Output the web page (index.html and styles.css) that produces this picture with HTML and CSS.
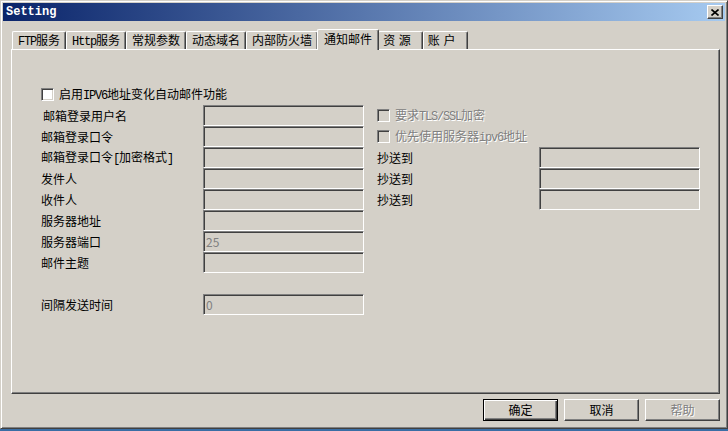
FILE: index.html
```html
<!DOCTYPE html>
<html>
<head lang="zh">
    <meta charset="UTF-8">
    <title>Setting</title>
    <link rel="stylesheet" href="styles.css">
</head>
<body>
<div class="window">
    <div class="titlebar">
        <span class="title">Setting</span>
        <span class="close">
            <svg width="8" height="7" viewBox="0 0 8 7">
                <path d="M0.5 0.5 L7.5 6.5 M7.5 0.5 L0.5 6.5" stroke="#000" stroke-width="1.6" fill="none"/>
            </svg>
        </span>
    </div>

    <div class="tabs">
        <div class="tab"><span class="en">FTP</span>服务</div>
        <div class="tab"><span class="en">Http</span>服务</div>
        <div class="tab">常规参数</div>
        <div class="tab">动态域名</div>
        <div class="tab">内部防火墙</div>
        <div class="tab selected">通知邮件</div>
        <div class="tab spaced">资 源</div>
        <div class="tab spaced">账 户</div>
    </div>

    <div class="panel">
        <div class="form">
            <label class="check top-check"><span class="box white"></span><span>启用<span class="en">IPV6</span>地址变化自动邮件功能</span></label>

            <span class="lbl indent">邮箱登录用户名</span>
            <span class="field"></span>
            <label class="check rlbl disabled"><span class="box"></span><span>要求<span class="en">TLS/SSL</span>加密</span></label>

            <span class="lbl">邮箱登录口令</span>
            <span class="field"></span>
            <label class="check rlbl disabled"><span class="box"></span><span>优先使用服务器<span class="en">ipv6</span>地址</span></label>

            <span class="lbl">邮箱登录口令<span class="en">[</span>加密格式<span class="en">]</span></span>
            <span class="field"></span>
            <span class="rlbl">抄送到</span>
            <span class="field rfield"></span>

            <span class="lbl">发件人</span>
            <span class="field"></span>
            <span class="rlbl">抄送到</span>
            <span class="field rfield"></span>

            <span class="lbl">收件人</span>
            <span class="field"></span>
            <span class="rlbl">抄送到</span>
            <span class="field rfield"></span>

            <span class="lbl">服务器地址</span>
            <span class="field"></span>

            <span class="lbl">服务器端口</span>
            <span class="field">25</span>

            <span class="lbl">邮件主题</span>
            <span class="field"></span>

            <span class="spacer"></span>

            <span class="lbl">间隔发送时间</span>
            <span class="field">0</span>
        </div>
    </div>

    <div class="buttons">
        <span class="btn default">确定</span>
        <span class="btn">取消</span>
        <span class="btn disabled">帮助</span>
    </div>
</div>
</body>
</html>
```

FILE: styles.css
```css
* {
    margin: 0;
    padding: 0;
    box-sizing: border-box;
}

body {
    width: 728px;
    height: 431px;
    background: #3a6ea5;
    font-family: "Noto Sans CJK SC", "Liberation Sans", sans-serif;
    font-size: 12px;
    color: #000;
    overflow: hidden;
}

/* latin text in the old bitmap font is 6px per char */
.en {
    font-family: "Liberation Mono", monospace;
    font-size: 12px;
    letter-spacing: -1.2px;
}

.window {
    width: 728px;
    height: 429px;
    background: #d4d0c8;
    border: 1px solid;
    border-color: #d4d0c8 #404040 #404040 #d4d0c8;
    box-shadow: inset 1px 1px #fff, inset -1px -1px #808080;
    padding: 2px;
}

.titlebar {
    height: 18px;
    display: flex;
    align-items: center;
    justify-content: space-between;
    padding: 0 2px 0 3px;
    background: linear-gradient(90deg, #0a246a, #a6caf0);
}

.title {
    color: #fff;
    font-family: "Liberation Mono", monospace;
    font-weight: bold;
    font-size: 12px;
}

.close {
    width: 16px;
    height: 14px;
    display: flex;
    align-items: center;
    justify-content: center;
    background: #d4d0c8;
    border: 1px solid;
    border-color: #fff #404040 #404040 #fff;
    box-shadow: inset -1px -1px #808080;
}

.tabs {
    display: flex;
    align-items: flex-end;
    height: 21px;
    margin-top: 7px;
    padding-left: 9px;
    position: relative;
    z-index: 1;
}

.tab {
    height: 18px;
    line-height: 16px;
    padding: 0 5px;
    white-space: pre;
    border: 1px solid;
    border-bottom: none;
    border-color: #fff #404040 #fff #fff;
    border-radius: 2px 2px 0 0;
    box-shadow: inset -1px 0 #808080;
    background: #d4d0c8;
}

.tab.spaced {
    padding: 0 11px 0 4px;
    word-spacing: 1px;
}

.tab.selected {
    height: 21px;
    margin: 0 -1px -1px;
    padding: 0 6px;
    line-height: 18px;
    position: relative;
}

.panel {
    height: 345px;
    margin: 0 5px 0 8px;
    border: 1px solid;
    border-color: #fff #404040 #404040 #fff;
    box-shadow: inset -1px -1px #808080;
    padding: 38px 0 0 29px;
}

.form {
    display: grid;
    grid-template-columns: 162px 174px 162px 161px;
    grid-template-rows: 17px;
    grid-auto-rows: 21px;
    align-items: center;
}

.top-check {
    grid-column: 1 / -1;
    align-self: start;
}

.check {
    display: flex;
    align-items: center;
    height: 13px;
    line-height: 13px;
}

.box {
    width: 13px;
    height: 13px;
    margin-right: 5px;
    border: 1px solid;
    border-color: #808080 #fff #fff #808080;
    box-shadow: inset 1px 1px #404040, inset -1px -1px #d4d0c8;
    background: #d4d0c8;
}

.box.white {
    background: #fff;
}

.check.disabled {
    color: #808080;
    text-shadow: 1px 1px #fff;
}

.lbl {
    grid-column: 1;
    line-height: 21px;
}

.lbl.indent {
    padding-left: 2px;
}

.rlbl {
    grid-column: 3;
    line-height: 21px;
}

.check.rlbl {
    line-height: 13px;
}

.field {
    grid-column: 2;
    width: 161px;
    height: 21px;
    padding: 2px 0 0 2px;
    line-height: 16px;
    color: #808080;
    border: 1px solid;
    border-color: #808080 #fff #fff #808080;
    box-shadow: inset 1px 1px #404040, inset -1px -1px #d4d0c8;
    background: #d4d0c8;
}

.field.rfield {
    grid-column: 4;
}

.spacer {
    grid-column: 1 / -1;
    height: 21px;
}

.buttons {
    display: flex;
    justify-content: flex-end;
    gap: 6px;
    margin-top: 5px;
    padding-right: 5px;
}

.btn {
    width: 75px;
    height: 22px;
    line-height: 20px;
    text-align: center;
    border: 1px solid;
    border-color: #fff #404040 #404040 #fff;
    box-shadow: inset -1px -1px #808080;
}

.btn.default {
    border-color: #000;
    box-shadow: inset 1px 1px #fff, inset -1px -1px #404040, inset -2px -2px #808080;
}

.btn.disabled {
    color: #808080;
    text-shadow: 1px 1px #fff;
}
```
